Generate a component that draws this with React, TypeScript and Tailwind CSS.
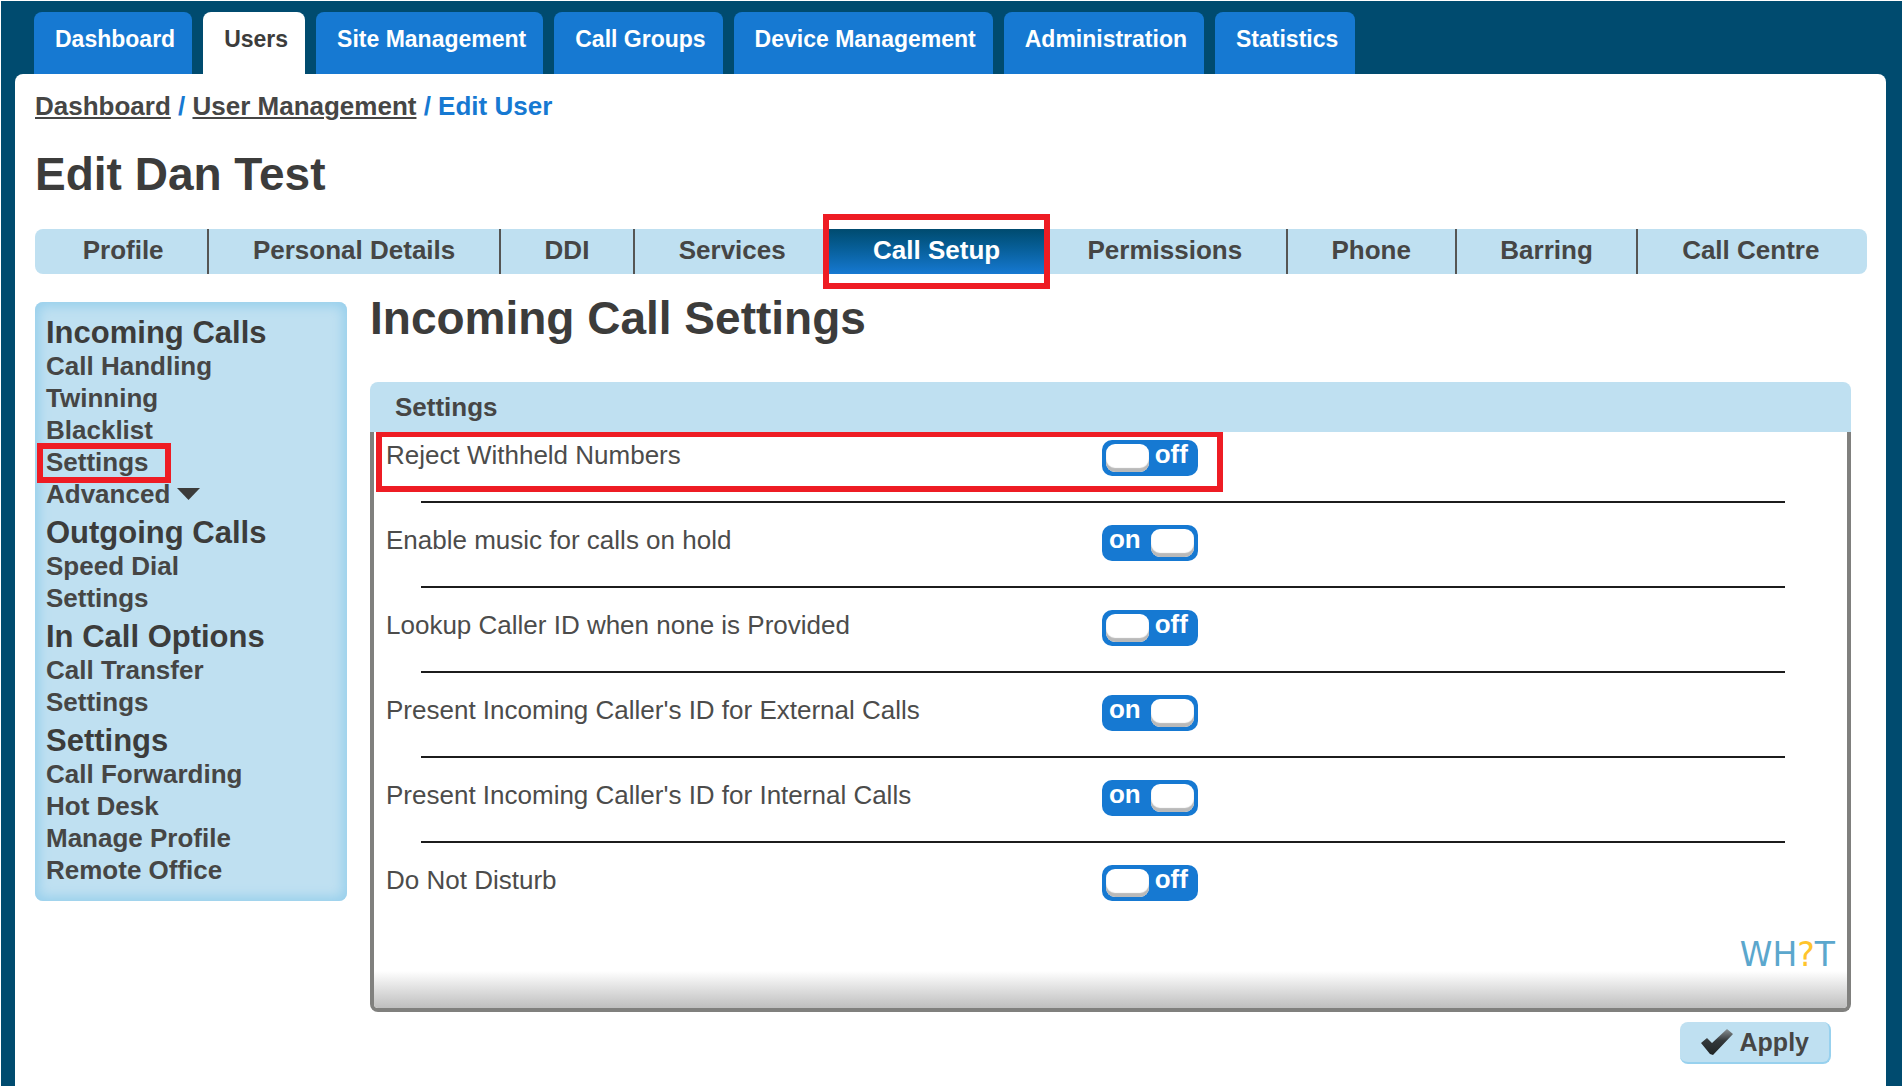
import { useState } from 'react';
import clsx from 'clsx';

const mainTabs = [
  'Dashboard',
  'Users',
  'Site Management',
  'Call Groups',
  'Device Management',
  'Administration',
  'Statistics',
];

const userTabs = [
  'Profile',
  'Personal Details',
  'DDI',
  'Services',
  'Call Setup',
  'Permissions',
  'Phone',
  'Barring',
  'Call Centre',
];

type MenuItem = { label: string; highlighted?: boolean; expandable?: boolean };

const menu: { title: string; items: MenuItem[] }[] = [
  {
    title: 'Incoming Calls',
    items: [
      { label: 'Call Handling' },
      { label: 'Twinning' },
      { label: 'Blacklist' },
      { label: 'Settings', highlighted: true },
      { label: 'Advanced', expandable: true },
    ],
  },
  { title: 'Outgoing Calls', items: [{ label: 'Speed Dial' }, { label: 'Settings' }] },
  { title: 'In Call Options', items: [{ label: 'Call Transfer' }, { label: 'Settings' }] },
  {
    title: 'Settings',
    items: [
      { label: 'Call Forwarding' },
      { label: 'Hot Desk' },
      { label: 'Manage Profile' },
      { label: 'Remote Office' },
    ],
  },
];

const settings = [
  { id: 'reject-withheld', label: 'Reject Withheld Numbers', on: false, highlighted: true },
  { id: 'hold-music', label: 'Enable music for calls on hold', on: true },
  { id: 'lookup-caller', label: 'Lookup Caller ID when none is Provided', on: false },
  { id: 'present-external', label: "Present Incoming Caller's ID for External Calls", on: true },
  { id: 'present-internal', label: "Present Incoming Caller's ID for Internal Calls", on: true },
  { id: 'dnd', label: 'Do Not Disturb', on: false },
];

/** Red outline drawn over the part of the page being pointed out. */
function Highlight({ className }: { className: string }) {
  return (
    <span
      aria-hidden="true"
      className={clsx('pointer-events-none absolute z-10 border-[6px] border-[#ee1c24]', className)}
    />
  );
}

function MainNav() {
  return (
    <nav className="flex gap-[11px] pl-[33px] pt-[11px]">
      {mainTabs.map((tab) => (
        <a
          key={tab}
          href="#"
          className={clsx(
            'h-[62px] rounded-t-lg pl-[21px] pr-[17px] pt-[13px] text-[23px] leading-[28px] font-bold',
            tab === 'Users' ? 'bg-white text-[#3c3c3b]' : 'bg-[#1679d2] text-white',
          )}
        >
          {tab}
        </a>
      ))}
    </nav>
  );
}

function UserTabs() {
  return (
    <nav className="mt-[25px] flex h-[45px] rounded-lg bg-[#bfe0f1]">
      {userTabs.map((tab, i) => {
        const active = tab === 'Call Setup';
        const next = userTabs[i + 1];
        return (
          <a
            key={tab}
            href="#"
            className={clsx(
              'relative flex-auto pt-[6px] text-center text-[26px] leading-[30px] font-bold first:pl-1 last:pr-1',
              active
                ? 'bg-linear-to-b from-[#004b6f] to-[#1679d2] text-white'
                : 'text-[#464645]',
              next && !active && next !== 'Call Setup' && 'border-r-2 border-[#555554]',
            )}
          >
            {tab}
            {active && <Highlight className="-inset-x-[6px] -inset-y-[15px]" />}
          </a>
        );
      })}
    </nav>
  );
}

function Sidebar() {
  return (
    <aside className="w-[312px] shrink-0 self-start rounded-lg bg-[#bfe0f1] pb-[15px] pl-[11px] pt-[14px] text-[#3c3c3b] shadow-[inset_0_0_12px_4px_#97cfec]">
      {menu.map((group) => (
        <section key={group.title} className="not-first:mt-[6px]">
          <h3 className="text-[31px] leading-[34px] font-bold">{group.title}</h3>
          <ul className="text-[26px] leading-[32px] font-bold text-[#464645]">
            {group.items.map((item) => (
              <li key={item.label}>
                <a href="#" className="relative inline-flex items-center gap-[7px]">
                  {item.label}
                  {item.expandable && (
                    <svg width="23" height="12" viewBox="0 0 23 12" fill="#3c3c3b">
                      <path d="M0 0h23L11.500 12z" />
                    </svg>
                  )}
                  {item.highlighted && <Highlight className="-left-[9px] -right-[22px] -top-[3px] -bottom-[5px]" />}
                </a>
              </li>
            ))}
          </ul>
        </section>
      ))}
    </aside>
  );
}

function Toggle({ id, defaultOn }: { id: string; defaultOn: boolean }) {
  const [on, setOn] = useState(defaultOn);
  return (
    <span className="relative block h-9 w-24 text-[26px] leading-[28px] font-bold text-white">
      <input
        id={id}
        type="checkbox"
        role="switch"
        checked={on}
        onChange={(e) => setOn(e.target.checked)}
        className="block h-9 w-24 cursor-pointer appearance-none rounded-[10px] bg-[#1679d2]"
      />
      <span
        className={clsx(
          'pointer-events-none absolute top-1 h-7 w-[43px] rounded-[9px] bg-white shadow-[inset_0_-4px_1px_#b9b9b9]',
          on ? 'right-1' : 'left-1',
        )}
      />
      <span className={clsx('pointer-events-none absolute top-0', on ? 'left-[7px]' : 'right-[10px]')}>
        {on ? 'on' : 'off'}
      </span>
    </span>
  );
}

function SettingsPanel() {
  return (
    <section className="mt-[34px]">
      <h3 className="h-[50px] rounded-t-lg bg-[#bfe0f1] pl-[25px] pt-[10px] text-[26px] leading-[30px] font-bold text-[#464645]">
        Settings
      </h3>
      <div className="overflow-hidden rounded-b-lg border-x-4 border-b-4 border-[#80807e]">
        {settings.map((row, i) => (
          <div key={row.id}>
            <div className="relative flex pl-3 pt-2">
              <label htmlFor={row.id} className="w-[49%] text-[26px] leading-[30px] text-[#4c4c4b]">
                {row.label}
              </label>
              <Toggle id={row.id} defaultOn={row.on} />
              {row.highlighted && <Highlight className="-bottom-[16px] left-[2px] -top-px w-[57.5%]" />}
            </div>
            {i < settings.length - 1 && (
              <hr className="mb-[14px] ml-[47px] mr-[62px] mt-[25px] border-t-2 border-[#1c1c1c]" />
            )}
          </div>
        ))}
        <div className="mt-[38px] flex justify-end pr-3">
          <a
            href="#"
            aria-label="What is this?"
            className="font-['DejaVu_Sans',sans-serif] text-[33px] leading-[32px] text-[#5ba7cd]"
          >
            WH<span className="text-[#ffc42b]">?</span>T
          </a>
        </div>
        <div className="h-[37px] bg-linear-to-b from-white to-[#bfbfbf]" />
      </div>
    </section>
  );
}

function ApplyButton() {
  return (
    <button
      type="button"
      className="mr-5 mt-[10px] flex h-[42px] cursor-pointer items-center gap-[7px] rounded-lg border-b-2 border-r-2 border-[#98d1ee] bg-[#bfe0f1] pl-[21px] pr-5 text-[25px] leading-[30px] font-bold text-[#464645]"
    >
      <svg width="32" height="26" viewBox="0 0 32 26">
        <defs>
          <linearGradient id="tick" x1="0" y1="0" x2="0" y2="1">
            <stop offset="0" stopColor="#8a9194" />
            <stop offset="0.45" stopColor="#33383a" />
            <stop offset="1" stopColor="#1f2425" />
          </linearGradient>
        </defs>
        <path d="M0 14 L6 9 L11 14 L26 0 L32 5 L12 26 L9 25 Z" fill="url(#tick)" />
      </svg>
      Apply
    </button>
  );
}

export default function App() {
  return (
    <div className="flex min-h-screen flex-col border-b-2 border-l border-t border-white bg-[#004b6f] font-['Liberation_Sans',Arial,sans-serif]">
      <MainNav />
      <div className="ml-[14px] mr-4 flex-1 rounded-t-lg bg-white pl-5 pr-[19px] pt-[17px]">
        <nav aria-label="Breadcrumb" className="text-[26px] leading-[30px] font-bold text-[#1679d2]">
          <a href="#" className="text-[#464645] underline decoration-2 underline-offset-2">Dashboard</a>
          {' / '}
          <a href="#" className="text-[#464645] underline decoration-2 underline-offset-2">User Management</a>
          {' / Edit User'}
        </nav>
        <h1 className="mt-[23px] text-[46px] leading-[60px] font-bold text-[#3c3c3b]">Edit Dan Test</h1>

        <UserTabs />

        <div className="mt-[28px] flex gap-[23px]">
          <Sidebar />
          <main className="mr-4 flex-1">
            <h2 className="-mt-[14px] text-[46px] leading-[60px] font-bold text-[#3c3c3b]">
              Incoming Call Settings
            </h2>
            <SettingsPanel />
            <div className="flex justify-end">
              <ApplyButton />
            </div>
          </main>
        </div>
      </div>
    </div>
  );
}
